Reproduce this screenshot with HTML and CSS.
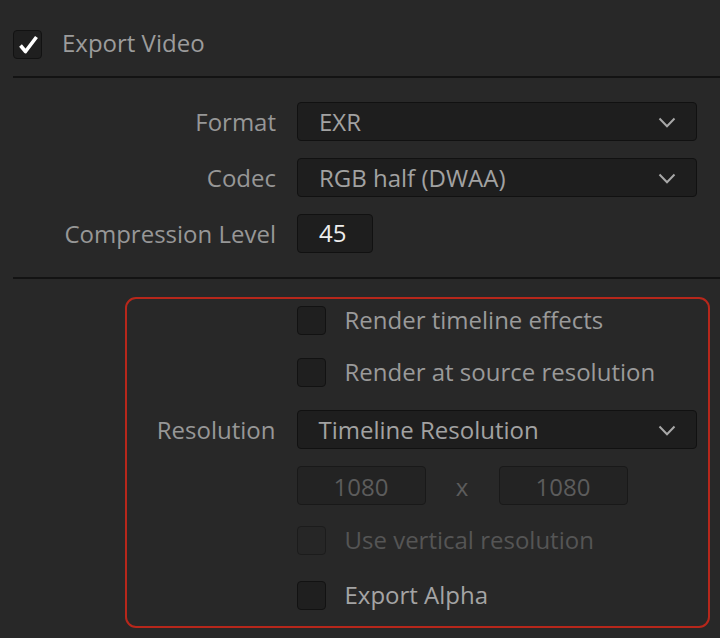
FILE: index.html
```html
<!DOCTYPE html>
<html>
<head>
<meta charset="utf-8">
<link rel="stylesheet" href="styles.css">
</head>
<body>
<div class="panel">
  <div class="export-row">
    <span class="cb">
      <svg width="29" height="29" viewBox="0 0 29 29"><path d="M7.5 15.5 L12.5 21.5 L23.5 7" fill="none" stroke="#ffffff" stroke-width="3.6" stroke-linejoin="round"/></svg>
    </span>
    <span class="title">Export Video</span>
  </div>
  <div class="sep"></div>
  <div class="form">
    <div class="lbl">Format</div>
    <div class="select"><span>EXR</span><svg class="chev" width="18" height="11" viewBox="0 0 18 11"><polyline points="1.5,1.5 9,9.2 16.5,1.5" fill="none" stroke="#a8a8a8" stroke-width="2"/></svg></div>
    <div class="lbl">Codec</div>
    <div class="select"><span>RGB half (DWAA)</span><svg class="chev" width="18" height="11" viewBox="0 0 18 11"><polyline points="1.5,1.5 9,9.2 16.5,1.5" fill="none" stroke="#a8a8a8" stroke-width="2"/></svg></div>
    <div class="lbl">Compression Level</div>
    <div class="num">45</div>
  </div>
  <div class="sep sep2"></div>
  <div class="highlight">
    <div class="row r1">
      <div></div>
      <div class="opt"><span class="cb"></span><span class="opt-text">Render timeline effects</span></div>
    </div>
    <div class="row r2">
      <div></div>
      <div class="opt"><span class="cb"></span><span class="opt-text">Render at source resolution</span></div>
    </div>
    <div class="row r3">
      <div class="lbl">Resolution</div>
      <div class="select"><span>Timeline Resolution</span><svg class="chev" width="18" height="11" viewBox="0 0 18 11"><polyline points="1.5,1.5 9,9.2 16.5,1.5" fill="none" stroke="#a8a8a8" stroke-width="2"/></svg></div>
    </div>
    <div class="row r4">
      <div></div>
      <div class="dims"><div class="dim">1080</div><span class="x">x</span><div class="dim">1080</div></div>
    </div>
    <div class="row r5">
      <div></div>
      <div class="opt disabled"><span class="cb"></span><span class="opt-text">Use vertical resolution</span></div>
    </div>
    <div class="row r6">
      <div></div>
      <div class="opt"><span class="cb"></span><span class="opt-text">Export Alpha</span></div>
    </div>
  </div>
</div>
</body>
</html>
```
FILE: styles.css
```css
html, body {
  margin: 0;
  padding: 0;
  background: #282828;
}
body {
  width: 720px;
  height: 638px;
  overflow: hidden;
  font-family: "Open Sans", "Noto Sans", sans-serif;
  font-size: 24px;
  color: #979797;
}
.panel {
  padding: 30px 0 0 13px;
}
.export-row {
  display: flex;
  align-items: center;
  gap: 20px;
  height: 29px;
}
.cb {
  box-sizing: border-box;
  width: 29px;
  height: 29px;
  flex: none;
  background: #1f1f1f;
  border: 1.5px solid #121212;
  border-radius: 4px;
  display: flex;
  align-items: center;
  justify-content: center;
}
.cb svg {
  display: block;
  margin: -1.5px;
}
.title {
  color: #9c9c9c;
  line-height: 29px;
  padding-bottom: 4px;
}
.sep {
  height: 2px;
  background: #131313;
  margin-top: 17px;
}
.sep2 {
  margin-top: 24px;
}
.form {
  display: grid;
  grid-template-columns: 263px 400px;
  column-gap: 21px;
  row-gap: 17px;
  margin-top: 24px;
  align-items: center;
}
.lbl {
  text-align: right;
  white-space: nowrap;
  color: #979797;
  line-height: 30px;
}
.select {
  box-sizing: border-box;
  height: 39px;
  background: #1e1e1e;
  border: 1.5px solid #111111;
  border-radius: 4px;
  display: flex;
  align-items: center;
  justify-content: space-between;
  padding: 0 20px 0 21px;
  color: #a2a2a2;
}
.chev {
  display: block;
  margin-top: 1px;
}
.num {
  box-sizing: border-box;
  width: 76px;
  height: 39px;
  background: #1e1e1e;
  border: 1.5px solid #111111;
  border-radius: 4px;
  padding-left: 21px;
  line-height: 36px;
  color: #ededed;
}
.highlight {
  box-sizing: border-box;
  margin: 18px 0 0 112px;
  width: 585px;
  height: 331px;
  border: 2.5px solid #b7271b;
  border-radius: 11px;
  padding: 7px 11px 0 0;
}
.row {
  display: grid;
  grid-template-columns: 148.5px 400px;
  column-gap: 21px;
  align-items: center;
}
.r2 { margin-top: 23px; }
.r3 { margin-top: 23px; }
.r4 { margin-top: 17px; }
.r5 { margin-top: 21px; }
.r6 { margin-top: 26px; }
.opt {
  display: flex;
  align-items: center;
  gap: 19px;
  height: 29px;
}
.opt-text {
  color: #9a9a9a;
  white-space: nowrap;
  padding-bottom: 2px;
}
.r6 .opt-text {
  color: #a4a4a4;
}
.disabled .cb {
  background: #262626;
  border-color: #1c1c1c;
}
.disabled .opt-text {
  color: #555555;
}
.dims {
  display: flex;
  align-items: center;
}
.dim {
  box-sizing: border-box;
  width: 129px;
  height: 39px;
  background: #232323;
  border: 1.5px solid #191919;
  border-radius: 4px;
  text-align: center;
  line-height: 36px;
  padding-top: 2px;
  color: #5c5c5c;
}
.x {
  width: 73px;
  text-align: center;
  color: #5c5c5c;
  padding-top: 2px;
}
```
